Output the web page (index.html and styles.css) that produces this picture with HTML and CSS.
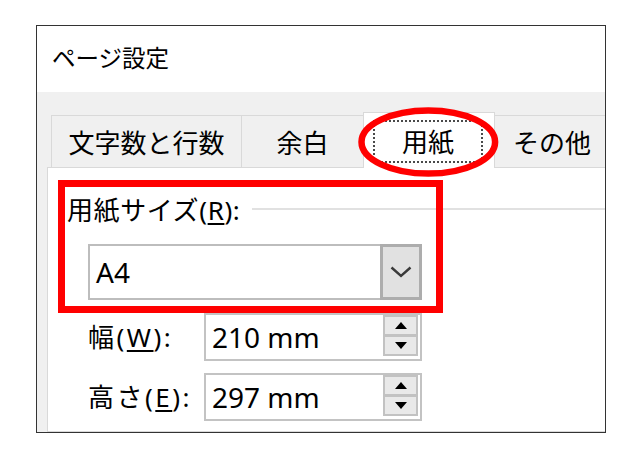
FILE: index.html
```html
<!DOCTYPE html>
<html lang="ja">
<head>
<meta charset="utf-8">
<title>ページ設定</title>
<link rel="stylesheet" href="styles.css">
</head>
<body>
<div class="frame">
  <div class="titlebar"><span class="title">ページ設定</span></div>
  <div class="dialog-body">
    <div class="tabs">
      <div class="tab tab-1">文字数と行数</div>
      <div class="tab tab-2">余白</div>
      <div class="tab tab-3 selected"><span class="focus">用紙</span></div>
      <div class="tab tab-4">その他</div>
    </div>
    <div class="pane">
      <div class="group-head">
        <span class="group-label">用紙サイズ(<u>R</u>):</span>
        <span class="group-line"></span>
      </div>
      <div class="combo">
        <span class="combo-value">A4</span>
        <span class="combo-btn">
          <svg width="22" height="12" viewBox="0 0 22 12"><polyline points="1.5,1.5 11,10 20.5,1.5" fill="none" stroke="#3a3a3a" stroke-width="2.4"/></svg>
        </span>
      </div>
      <div class="field-row">
        <span class="field-label">幅(<u>W</u>):</span>
        <div class="spin-input">
          <span class="value">210 mm</span>
          <span class="spin"><span class="spin-btn"><span class="arrow-up"></span></span><span class="spin-btn lower"><span class="arrow-down"></span></span></span>
        </div>
      </div>
      <div class="field-row">
        <span class="field-label">高さ(<u>E</u>):</span>
        <div class="spin-input">
          <span class="value">297 mm</span>
          <span class="spin"><span class="spin-btn"><span class="arrow-up"></span></span><span class="spin-btn lower"><span class="arrow-down"></span></span></span>
        </div>
      </div>
    </div>
  </div>
  <div class="mark-rect"></div>
  <svg class="mark-ellipse" width="570" height="408" viewBox="0 0 570 408">
    <ellipse cx="391.3" cy="116" rx="66.8" ry="31.6" fill="none" stroke="#ff0000" stroke-width="6.5"/>
  </svg>
</div>
</body>
</html>
```
FILE: styles.css
```css
* { box-sizing: border-box; }

html, body {
  margin: 0;
  padding: 0;
  background: #ffffff;
}

body {
  font-family: "Noto Sans", "Noto Sans CJK JP", sans-serif;
  color: #000;
  padding: 25px 0 0 36px;
}

.frame {
  position: relative;
  width: 570px;
  height: 408px;
  border: 1px solid #333;
  overflow: hidden;
  display: flex;
  flex-direction: column;
  background: #f0f0f0;
}

.titlebar {
  height: 66px;
  background: #fff;
  display: flex;
  align-items: center;
  padding: 0 0 3px 15px;
  flex: none;
}

.title {
  font-family: "Noto Sans CJK JP", sans-serif;
  font-size: 23.5px;
  line-height: 1;
}

.dialog-body {
  flex: 1;
  padding: 20px 0 0 10px;
  display: flex;
  flex-direction: column;
  min-height: 0;
}

.tabs {
  display: flex;
  align-items: flex-end;
  height: 55px;
  padding-left: 4px;
  flex: none;
}

.tab {
  height: 52px;
  border: 1px solid #d9d9d9;
  border-bottom: none;
  background: #f0f0f0;
  display: flex;
  align-items: center;
  justify-content: center;
  font-family: "Noto Sans CJK JP", sans-serif;
  font-size: 26px;
  line-height: 1;
  flex: none;
  margin-left: -1px;
}

.tab-1 { width: 191px; margin-left: 0; }
.tab-2 { width: 123px; }
.tab-4 { width: 200px; justify-content: flex-start; padding-left: 18px; }

.tab-3 {
  width: 132px;
  height: 56px;
  margin-bottom: -1px;
  background: #fff;
  position: relative;
  z-index: 1;
  padding: 7px 11px 5px 9px;
  align-items: stretch;
}

.focus {
  flex: 1;
  border: 2px dotted #4a4a4a;
  display: flex;
  align-items: center;
  justify-content: center;
  padding-bottom: 2px;
}

.pane {
  flex: 1;
  width: 600px;
  background: #fff;
  border: 1px solid #d9d9d9;
  padding: 24px 0 0 19px;
}

.group-head {
  display: flex;
  align-items: center;
  height: 36px;
}

.group-label {
  font-size: 26px;
  line-height: 1;
  white-space: nowrap;
  letter-spacing: 0.6px;
}

.group-line {
  flex: 1;
  height: 2px;
  background: #e1e1e1;
  margin-left: 12px;
  margin-top: -2px;
}

u { text-underline-offset: 3px; text-decoration-thickness: 1.5px; }

.combo {
  margin: 16px 0 0 21px;
  width: 334px;
  height: 56px;
  border: 2px solid #bdbdbd;
  display: flex;
  align-items: stretch;
}

.combo-value {
  flex: 1;
  display: flex;
  align-items: center;
  padding-left: 6px;
  font-size: 28px;
  line-height: 1;
}

.combo-btn {
  width: 42px;
  margin: -2px -2px -2px 0;
  background: #e1e1e1;
  border: 3px solid #adadad;
  display: flex;
  align-items: center;
  justify-content: center;
}

.field-row {
  display: flex;
  align-items: center;
  margin: 13px 0 0 21px;
}

.field-row + .field-row { margin-top: 12px; }

.field-label {
  width: 116px;
  font-size: 26px;
  line-height: 1;
  white-space: nowrap;
  letter-spacing: 2.5px;
}

.spin-input {
  width: 218px;
  height: 48px;
  border: 2px solid #c3c3c3;
  display: flex;
  align-items: flex-start;
}

.value {
  flex: 1;
  align-self: center;
  padding-left: 6px;
  font-size: 28px;
  line-height: 1;
}

.spin {
  width: 35px;
  margin: 0 2px 0 0;
  display: flex;
  flex-direction: column;
}

.spin-btn {
  height: 21px;
  background: #e9e9e9;
  border: 2px solid #c2c2c2;
  display: flex;
  align-items: center;
  justify-content: center;
}

.spin-btn.lower { margin-top: -1px; }

.arrow-up {
  width: 0;
  height: 0;
  border-left: 6px solid transparent;
  border-right: 6px solid transparent;
  border-bottom: 7px solid #000;
}

.arrow-down {
  width: 0;
  height: 0;
  border-left: 6px solid transparent;
  border-right: 6px solid transparent;
  border-top: 7px solid #000;
}

.mark-rect {
  position: absolute;
  left: 21px;
  top: 154px;
  width: 385px;
  height: 133px;
  border: 7px solid #ff0000;
  z-index: 3;
}

.mark-ellipse {
  position: absolute;
  left: 0;
  top: 0;
  z-index: 4;
  pointer-events: none;
}
```
